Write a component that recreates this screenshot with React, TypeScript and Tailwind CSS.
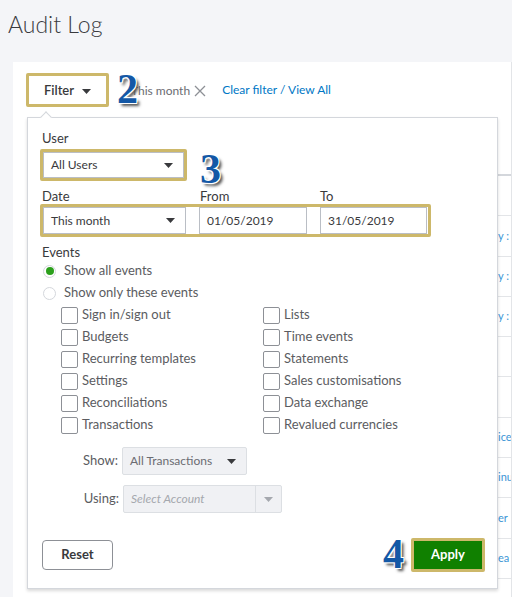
import React from 'react';

const Caret = ({ className = '' }: { className?: string }) => (
  <svg width="9" height="5" viewBox="0 0 9 5" className={className}>
    <path d="M0 0h9L4.5 5z" fill="currentColor" />
  </svg>
);

// big annotation digits drawn over the screenshot
const Marker = ({ n, className }: { n: string; className: string }) => (
  <span
    className={`absolute font-['Liberation_Serif',serif] text-[42px] leading-none font-bold text-[#1358a6] [text-shadow:1px_1px_0_#fff,-1px_-1px_0_#fff,1px_-1px_0_#fff,-1px_1px_0_#fff,3px_3px_3px_#555] ${className}`}
  >
    {n}
  </span>
);

const leftEvents = ['Sign in/sign out', 'Budgets', 'Recurring templates', 'Settings', 'Reconciliations', 'Transactions'];
const rightEvents = ['Lists', 'Time events', 'Statements', 'Sales customisations', 'Data exchange', 'Revalued currencies'];

// only the last few px of each table row peek out from under the dropdown
const rows = ['', 'y :', 'y :', 'y :', '', '', 'ice', 'inu', 'er', 'ea'];

function Checkbox({ label }: { label: string }) {
  return (
    <label className="flex h-[22px] items-center gap-[4px]">
      <span className="h-[17px] w-[17px] rounded-[2px] border border-[#8d9096] bg-white" />
      <span className="text-[13px] text-[#5b5c61]">{label}</span>
    </label>
  );
}

export default function App() {
  return (
    <div className="relative h-[600px] w-[514px] overflow-hidden bg-white font-['Lato',sans-serif] text-[#393a3d]">
      <header className="h-[62px] w-[512px] bg-[#f4f5f8] pl-[8px] pt-[11px]">
        <h1 className="text-[23px] leading-[26px] font-light text-[#393a3d]">Audit Log</h1>
      </header>

      <div className="flex">
        <div className="h-[535px] w-[13px] bg-[#f4f5f8]" />
        <main className="h-[535px] w-[499px] overflow-hidden border-r border-[#e3e5e8] bg-white">
          <div className="flex items-center pl-[13px] pt-[11px]">
            <button className="flex h-[34px] w-[83px] items-center justify-center gap-[8px] rounded-[2px] border-[3px] border-[#cdb86a] bg-white pt-[2px] text-[13px] font-semibold text-[#393a3d]">
              Filter
              <Caret />
            </button>
            <span className="ml-[22px] flex items-center gap-[4px] pt-[1px] text-[12px] text-[#6b6c72]">
              This month
              <svg width="12" height="12" viewBox="0 0 12 12">
                <path d="M1 1l10 10M11 1L1 11" stroke="#8d9096" strokeWidth="1.3" />
              </svg>
            </span>
            <a className="ml-[16px] text-[12px] text-[#0077c5]">Clear filter / View All</a>
          </div>

          <div className="ml-[14px] mt-[29px]">
            <div className="h-[40px] border-b-2 border-[#d4d7dc]" />
            {rows.map((t, i) => (
              <div key={i} className="flex h-[40.3px] items-center justify-end border-b border-[#e3e5e8]">
                <span className="w-[13px] overflow-hidden whitespace-nowrap text-[11px] text-[#3c96d6]">{t}</span>
              </div>
            ))}
          </div>
        </main>
      </div>

      {/* filter dropdown */}
      <div className="absolute left-[27px] top-[117px] flex h-[472px] w-[471px] flex-col border border-[#d4d7dc] bg-white pl-[14px] pr-[12px] shadow-[0_2px_3px_rgba(0,0,0,0.15)]">
        <span className="absolute -top-[5px] left-[14px] h-[8px] w-[8px] rotate-45 border-l border-t border-[#d4d7dc] bg-white" />

        <div className="pt-[12px] text-[13px] leading-[16px]">User</div>
        <div className="-ml-[2px] mt-[3px] h-[32px] w-[147px] rounded-[2px] border-[3px] border-[#cdb86a]">
          <div className="flex h-full items-center justify-between border border-[#babec5] pl-[7px] pr-[10px] text-[12px] text-[#393a3d]">
            All Users
            <Caret />
          </div>
        </div>

        <div className="mt-[7px] flex text-[13px] leading-[16px]">
          <span className="w-[158px]">Date</span>
          <span className="w-[120px]">From</span>
          <span>To</span>
        </div>
        <div className="-ml-[2px] flex h-[33px] w-[391px] gap-[13px] rounded-[2px] border-[3px] border-[#cdb86a] pr-[1px]">
          <div className="flex w-[143px] items-center justify-between border border-[#babec5] pl-[7px] pr-[10px] text-[12px]">
            This month
            <Caret />
          </div>
          <div className="flex w-[108px] items-center border border-[#babec5] pl-[7px] text-[12px]">01/05/2019</div>
          <div className="flex w-[107px] items-center border border-[#babec5] pl-[7px] text-[12px]">31/05/2019</div>
        </div>

        <div className="mt-[8px] text-[13px] leading-[15px]">Events</div>
        <label className="flex h-[22px] items-center gap-[8px] pl-[1px]">
          <span className="flex h-[13px] w-[13px] items-center justify-center rounded-full border border-[#d4d7dc]">
            <span className="h-[8px] w-[8px] rounded-full bg-[#2ca01c]" />
          </span>
          <span className="text-[13px] text-[#5b5c61]">Show all events</span>
        </label>
        <label className="flex h-[22px] items-center gap-[8px] pl-[1px]">
          <span className="h-[13px] w-[13px] rounded-full border border-[#d4d7dc]" />
          <span className="text-[13px] text-[#5b5c61]">Show only these events</span>
        </label>

        <div className="flex pl-[19px]">
          <div className="w-[202px]">
            {leftEvents.map((l) => (
              <Checkbox key={l} label={l} />
            ))}
          </div>
          <div>
            {rightEvents.map((l) => (
              <Checkbox key={l} label={l} />
            ))}
          </div>
        </div>

        <div className="mt-[11px] flex items-center gap-[4px]">
          <span className="w-[76px] text-right text-[13px] text-[#5b5c61]">Show:</span>
          <div className="flex h-[28px] w-[125px] items-center justify-between rounded-[2px] border border-[#dcdfe3] bg-[#f0f1f4] pl-[7px] pr-[10px] text-[12px] text-[#6b6c72]">
            All Transactions
            <Caret className="text-[#393a3d]" />
          </div>
        </div>
        <div className="mt-[10px] flex items-center gap-[4px]">
          <span className="w-[77px] text-right text-[13px] text-[#5b5c61]">Using:</span>
          <div className="flex h-[28px] w-[159px] items-center rounded-[2px] border border-[#dcdfe3] bg-[#f0f1f4] text-[12px]">
            <span className="flex-1 pl-[7px] italic text-[#a5a8ae]">Select Account</span>
            <span className="flex h-full w-[26px] items-center justify-center border-l border-[#dcdfe3] text-[#a5a8ae]">
              <Caret />
            </span>
          </div>
        </div>

        <div className="mt-[25px] flex items-center justify-between">
          <button className="h-[30px] w-[71px] rounded-[4px] border border-[#8d9096] bg-white text-[13px] font-bold text-[#393a3d]">
            Reset
          </button>
          <div className="h-[34px] w-[74px] rounded-[2px] border-[3px] border-[#cdb86a]">
            <button className="h-full w-full bg-[#108000] text-[13px] font-bold text-white">Apply</button>
          </div>
        </div>
      </div>

      <Marker n="2" className="left-[117px] top-[68px]" />
      <Marker n="3" className="left-[200px] top-[148px]" />
      <Marker n="4" className="left-[383px] top-[533px]" />
    </div>
  );
}
